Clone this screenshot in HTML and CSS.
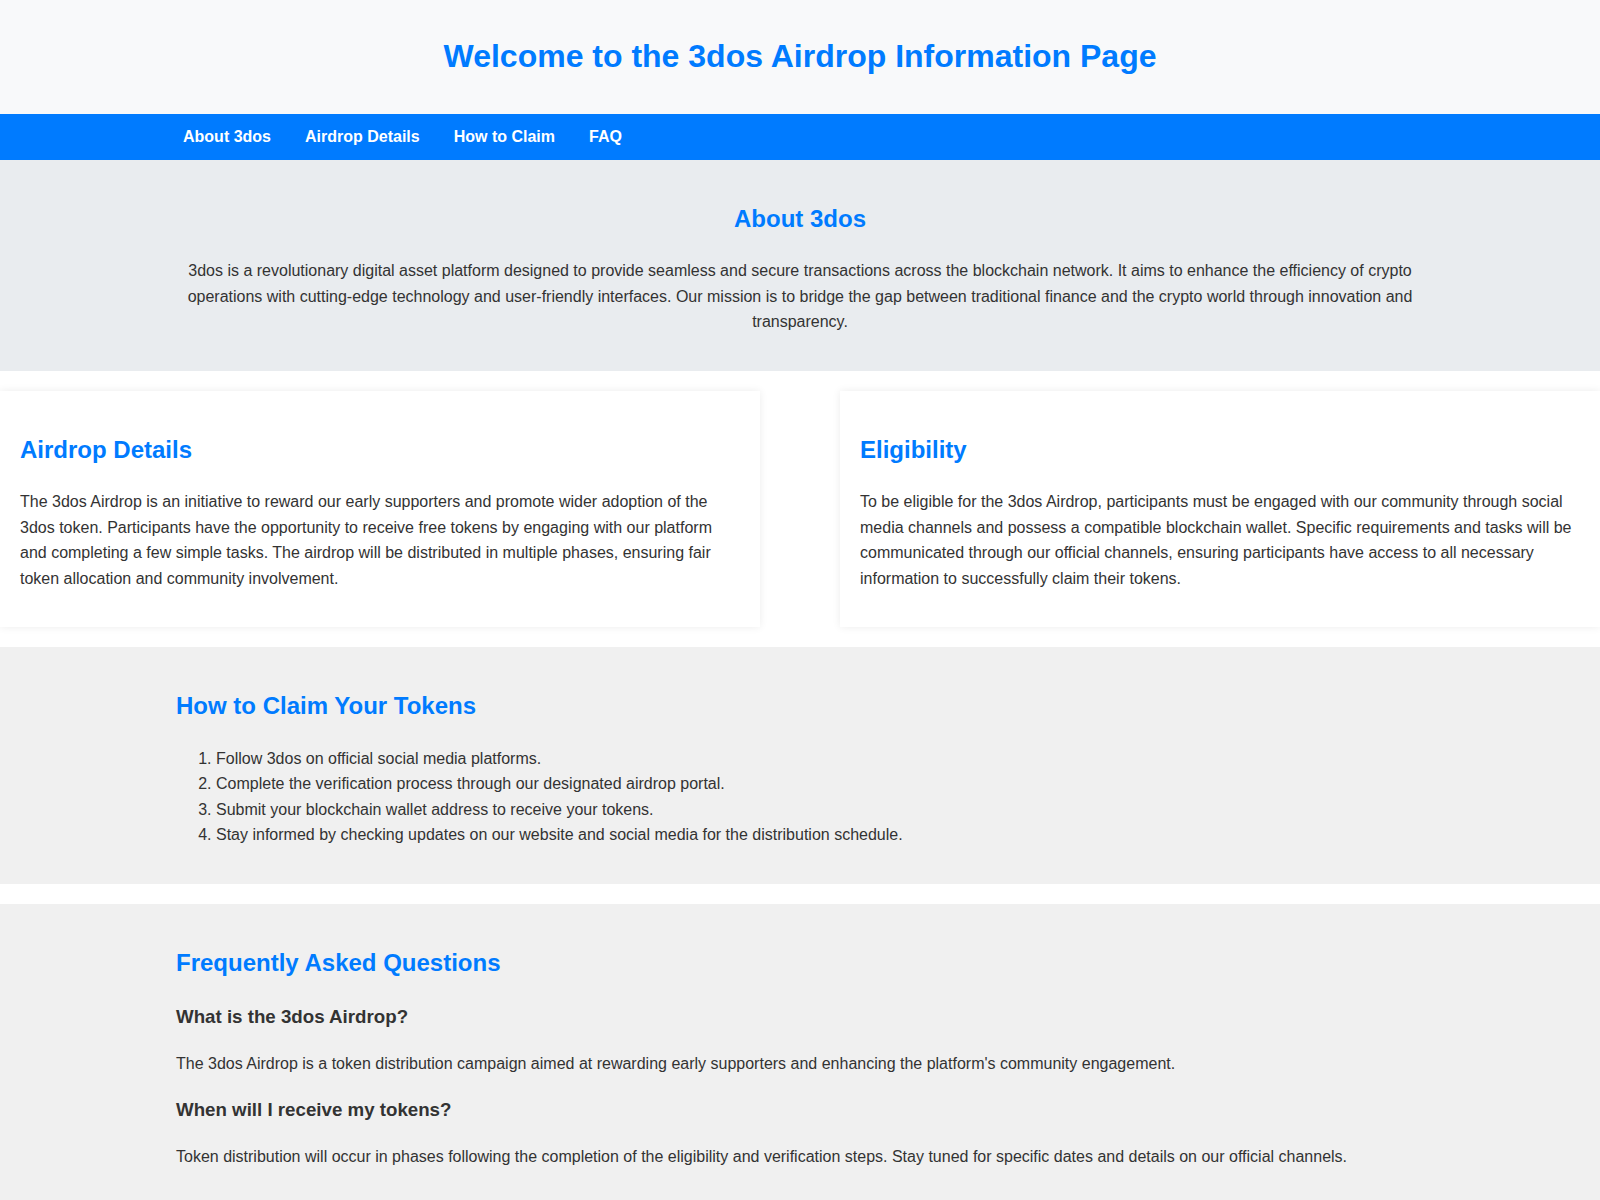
FILE: index.html
```html
<!DOCTYPE html>
<html lang="en">
<head>
  <meta charset="UTF-8">
  <title>3dos Airdrop Information</title>
  <link rel="stylesheet" href="styles.css">
</head>
<body>

  <!-- 상단 제목 -->
  <header class="site-header">
    <h1>Welcome to the 3dos Airdrop Information Page</h1>
  </header>

  <!-- 메뉴 -->
  <nav class="main-nav">
    <div class="container nav-links">
      <a href="#about">About 3dos</a>
      <a href="#details">Airdrop Details</a>
      <a href="#claim">How to Claim</a>
      <a href="#faq">FAQ</a>
    </div>
  </nav>

  <!-- 소개 -->
  <section id="about" class="about">
    <div class="container">
      <h2>About 3dos</h2>
      <p>3dos is a revolutionary digital asset platform designed to provide seamless and secure transactions across the blockchain network. It aims to enhance the efficiency of crypto operations with cutting-edge technology and user-friendly interfaces. Our mission is to bridge the gap between traditional finance and the crypto world through innovation and transparency.</p>
    </div>
  </section>

  <!-- 카드 두 개 -->
  <div class="card-row">
    <section id="details" class="card">
      <h2>Airdrop Details</h2>
      <p>The 3dos Airdrop is an initiative to reward our early supporters and promote wider adoption of the 3dos token. Participants have the opportunity to receive free tokens by engaging with our platform and completing a few simple tasks. The airdrop will be distributed in multiple phases, ensuring fair token allocation and community involvement.</p>
    </section>
    <section class="card">
      <h2>Eligibility</h2>
      <p>To be eligible for the 3dos Airdrop, participants must be engaged with our community through social media channels and possess a compatible blockchain wallet. Specific requirements and tasks will be communicated through our official channels, ensuring participants have access to all necessary information to successfully claim their tokens.</p>
    </section>
  </div>

  <!-- 받는 방법 -->
  <section id="claim" class="gray-section">
    <div class="container">
      <h2>How to Claim Your Tokens</h2>
      <ol>
        <li>Follow 3dos on official social media platforms.</li>
        <li>Complete the verification process through our designated airdrop portal.</li>
        <li>Submit your blockchain wallet address to receive your tokens.</li>
        <li>Stay informed by checking updates on our website and social media for the distribution schedule.</li>
      </ol>
    </div>
  </section>

  <!-- 자주 묻는 질문 -->
  <section id="faq" class="gray-section">
    <div class="container">
      <h2>Frequently Asked Questions</h2>
      <h3>What is the 3dos Airdrop?</h3>
      <p>The 3dos Airdrop is a token distribution campaign aimed at rewarding early supporters and enhancing the platform's community engagement.</p>
      <h3>When will I receive my tokens?</h3>
      <p>Token distribution will occur in phases following the completion of the eligibility and verification steps. Stay tuned for specific dates and details on our official channels.</p>
    </div>
  </section>

</body>
</html>
```

FILE: styles.css
```css
body {
  font-family: "Liberation Sans", Arial, sans-serif;
  line-height: 1.6;
  color: #333;
  background-color: #fff;
  margin: 0;
  padding: 0;
}
.container {
  max-width: 1248px;
  margin: 0 auto;
}
h2 {
  color: #007bff;
}
/* 상단 제목 */
.site-header {
  background-color: #f8f9fa;
  text-align: center;
  padding: 31px 20px 32px;
}
.site-header h1 {
  margin: 0;
  font-size: 32px;
  color: #007bff;
}
/* 메뉴 */
.main-nav {
  background-color: #007bff;
}
.nav-links {
  display: flex;
  gap: 20px;
}
.nav-links a {
  color: #fff;
  font-weight: bold;
  text-decoration: none;
  padding: 10px 7px;
}
.nav-links a:hover {
  text-decoration: underline;
}
/* 소개 영역 */
.about {
  background-color: #e9ecef;
  text-align: center;
  padding: 20px;
}
/* 카드 */
.card-row {
  display: flex;
  justify-content: space-between;
  margin: 20px 0;
}
.card {
  width: 45%;
  padding: 20px;
  background-color: #fff;
  box-shadow: 0 0 8px rgba(0,0,0,0.08);
}
/* 회색 섹션 */
.gray-section {
  background-color: #f0f0f0;
  padding: 20px;
  margin: 20px 0;
}
```
